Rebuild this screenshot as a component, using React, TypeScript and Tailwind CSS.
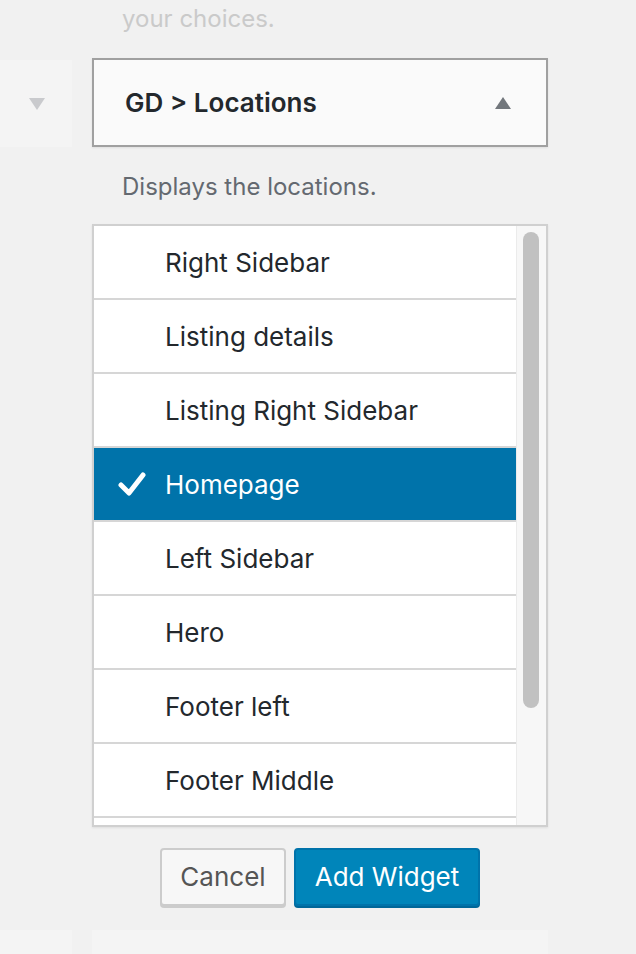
const items = [
  'Right Sidebar',
  'Listing details',
  'Listing Right Sidebar',
  'Homepage',
  'Left Sidebar',
  'Hero',
  'Footer left',
  'Footer Middle',
];

function Check() {
  return (
    <svg width="28" height="26" viewBox="0 0 28 26" className="shrink-0">
      <path d="M3 14 L11 22 L25 4" fill="none" stroke="white" strokeWidth="5" strokeLinecap="round" strokeLinejoin="round" />
    </svg>
  );
}

function Tri({ up, color }: { up?: boolean; color: string }) {
  return (
    <svg width="16" height="12" viewBox="0 0 16 12">
      <path d={up ? 'M8 0 L16 12 L0 12 Z' : 'M0 0 L16 0 L8 12 Z'} fill={color} />
    </svg>
  );
}

export default function App() {
  return (
    <div
      className="w-[636px] h-[954px] overflow-hidden bg-[#f1f1f1] flex gap-[20px]"
      style={{ fontFamily: 'Inter, "Noto Sans", sans-serif' }}
    >
      {/* left column, partly off screen */}
      <div className="w-[72px] shrink-0 flex flex-col">
        <div className="mt-[60px] h-[87px] shrink-0 bg-[#f4f4f4] flex items-center justify-center pl-[2px]">
          <Tri color="#c9cacd" />
        </div>
        <div className="mt-[783px] h-[30px] shrink-0 bg-[#f4f4f4]" />
      </div>

      {/* main column */}
      <div className="w-[456px] shrink-0 flex flex-col">
        <div className="h-[58px] shrink-0 pl-[30px] pt-[4px] text-[24px] text-[#cacaca] leading-[30px]">your choices.</div>

        <div className="h-[89px] shrink-0 border-2 border-[#a0a0a0] bg-[#fafafa] shadow-[0_1px_2px_rgba(0,0,0,0.08)] flex items-center justify-between pl-[31px] pr-[35px]">
          <span className="text-[26px] font-semibold text-[#23282d]">GD &gt; Locations</span>
          <Tri up color="#72777c" />
        </div>

        <div className="h-[77px] shrink-0 flex items-center pl-[30px] pt-[2px] text-[24px] text-[#646970]">
          Displays the locations.
        </div>

        <div className="h-[603px] shrink-0 border-2 border-[#d0d0d0] bg-white shadow-[0_1px_2px_rgba(0,0,0,0.08)] flex overflow-hidden">
          <div className="flex-1 flex flex-col">
            {items.map((it) => {
              const sel = it === 'Homepage';
              return (
                <div
                  key={it}
                  className={`h-[74px] shrink-0 border-b-2 border-[#d6d6d6] flex items-center ${
                    sel ? 'bg-[#0073aa] text-white' : 'bg-white text-[#23282d]'
                  }`}
                >
                  <div className="w-[71px] flex justify-center pl-[4px]">{sel && <Check />}</div>
                  <span className="text-[26px]">{it}</span>
                </div>
              );
            })}
            {/* next row, scrolled out of view */}
            <div className="h-[74px] shrink-0 bg-white" />
          </div>
          <div className="w-[30px] shrink-0 bg-[#f7f7f7] border-l border-[#ebebeb] pt-[6px] pl-[6px]">
            <div className="w-[16px] h-[476px] rounded-full bg-[#c1c1c1]" />
          </div>
        </div>

        <div className="mt-[21px] shrink-0 flex justify-center gap-[8px]">
          <button className="w-[126px] h-[58px] rounded-[4px] border-2 border-[#cccccc] bg-[#f7f7f7] text-[#555555] text-[26px] leading-none whitespace-nowrap shadow-[0_2px_0_#cccccc]">
            Cancel
          </button>
          <button className="w-[186px] h-[58px] rounded-[4px] border-2 border-[#0073aa] bg-[#0085ba] text-white text-[26px] leading-none whitespace-nowrap shadow-[0_2px_0_#006799]">
            Add Widget
          </button>
        </div>

        <div className="mt-[24px] h-[30px] shrink-0 bg-[#f4f4f4]" />
      </div>
    </div>
  );
}
